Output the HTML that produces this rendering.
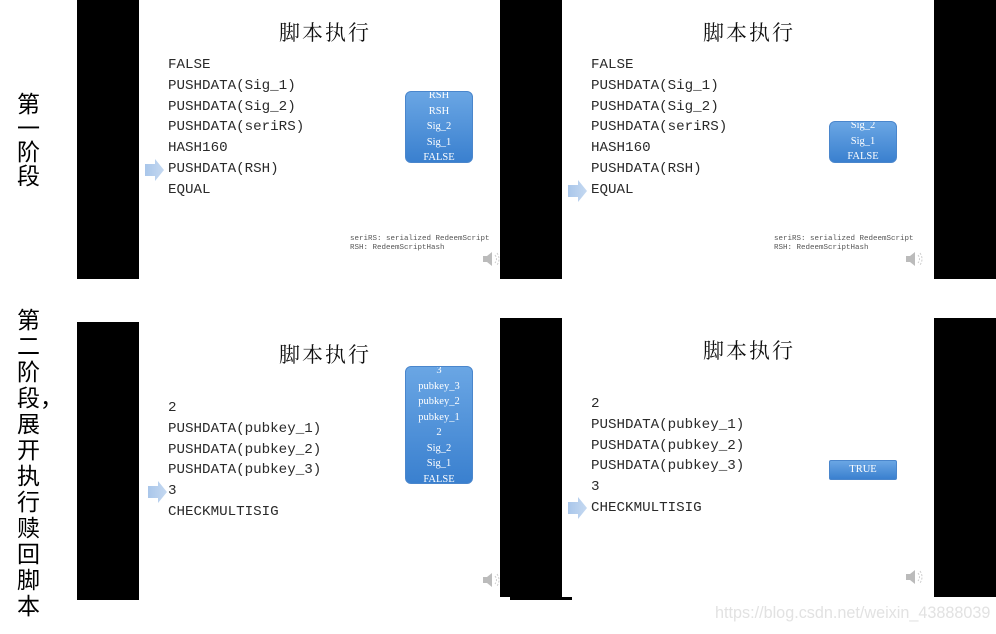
<!DOCTYPE html>
<html><head><meta charset="utf-8"><style>
body{margin:0;width:996px;height:634px;background:#fff;position:relative;overflow:hidden;font-family:"Liberation Sans",sans-serif}
.a{position:absolute}
.blk{position:absolute;background:#000}
.t{position:absolute;font-family:"Noto Serif CJK SC","Noto Serif CJK JP",serif;font-size:21px;color:#111;letter-spacing:2px}
.code{position:absolute;font-family:"Liberation Mono",monospace;font-size:14.2px;color:#2a2a2a;line-height:20.8px;white-space:pre}
.stk{position:absolute;background:linear-gradient(#6aa6e4,#3a80cf);border:1px solid #4a86cc;border-radius:6px;color:#fff;font-family:"Liberation Serif",serif;font-size:10.5px;text-align:center;line-height:15.5px;overflow:hidden}
.arr{position:absolute;width:19px;height:22px}
.note{position:absolute;font-family:"Liberation Mono",monospace;font-size:7.5px;color:#555;line-height:9px;white-space:pre}
.lab{position:absolute;left:17px;font-family:"Noto Sans CJK SC",sans-serif;font-size:23px;line-height:24px;width:24px;color:#000}
.spk{position:absolute;width:20px;height:18px}
</style></head><body>
<div class="lab" style="top:90px">第<br>一<br>阶<br>段</div>
<div class="lab" style="top:305px;line-height:26px">第<br>二<br>阶<br>段，<br>展<br>开<br>执<br>行<br>赎<br>回<br>脚<br>本</div>

<div class="blk" style="left:77px;top:0;width:62px;height:279px"></div>
<div class="blk" style="left:500px;top:0;width:62px;height:279px"></div>
<div class="blk" style="left:934px;top:0;width:62px;height:279px"></div>
<div class="blk" style="left:77px;top:322px;width:62px;height:278px"></div>
<div class="blk" style="left:500px;top:318px;width:62px;height:279px"></div>
<div class="blk" style="left:510px;top:597px;width:62px;height:3px"></div>
<div class="blk" style="left:934px;top:318px;width:62px;height:279px"></div>

<svg width="0" height="0" style="position:absolute"><defs><linearGradient id="g" x1="0" x2="1"><stop offset="0" stop-color="#a9c6ea"/><stop offset="1" stop-color="#c5d9f1"/></linearGradient></defs></svg>

<!-- slide 1 -->
<div class="t" style="left:279px;top:17px">脚本执行</div>
<div class="code" style="left:168px;top:55px">FALSE
PUSHDATA(Sig_1)
PUSHDATA(Sig_2)
PUSHDATA(seriRS)
HASH160
PUSHDATA(RSH)
EQUAL</div>
<svg class="arr" style="left:145px;top:159px" viewBox="0 0 19 22"><path d="M0 5H10V0L19 11L10 22V17H0Z" fill="url(#g)"/></svg>
<div class="stk" style="left:405px;top:91px;width:66px;height:70px"><div style="margin-top:-4px">RSH<br>RSH<br>Sig_2<br>Sig_1<br>FALSE</div></div>
<div class="note" style="left:350px;top:235px">seriRS: serialized RedeemScript
RSH: RedeemScriptHash</div>
<svg class="spk" style="left:482px;top:250px" viewBox="0 0 20 18"><path d="M1 6H5L10 2V16L5 12H1Z" fill="#bbb"/><path d="M13 5Q16 9 13 13M15 3Q19 9 15 15" stroke="#ccc" fill="none" stroke-dasharray="2 1.5"/></svg>

<!-- slide 2 -->
<div class="t" style="left:703px;top:17px">脚本执行</div>
<div class="code" style="left:591px;top:55px">FALSE
PUSHDATA(Sig_1)
PUSHDATA(Sig_2)
PUSHDATA(seriRS)
HASH160
PUSHDATA(RSH)
EQUAL</div>
<svg class="arr" style="left:568px;top:180px" viewBox="0 0 19 22"><path d="M0 5H10V0L19 11L10 22V17H0Z" fill="url(#g)"/></svg>
<div class="stk" style="left:829px;top:121px;width:66px;height:40px"><div style="margin-top:-4px">Sig_2<br>Sig_1<br>FALSE</div></div>
<div class="note" style="left:774px;top:235px">seriRS: serialized RedeemScript
RSH: RedeemScriptHash</div>
<svg class="spk" style="left:905px;top:250px" viewBox="0 0 20 18"><path d="M1 6H5L10 2V16L5 12H1Z" fill="#bbb"/><path d="M13 5Q16 9 13 13M15 3Q19 9 15 15" stroke="#ccc" fill="none" stroke-dasharray="2 1.5"/></svg>

<!-- slide 3 -->
<div class="t" style="left:279px;top:339px">脚本执行</div>
<div class="code" style="left:168px;top:398px">2
PUSHDATA(pubkey_1)
PUSHDATA(pubkey_2)
PUSHDATA(pubkey_3)
3
CHECKMULTISIG</div>
<svg class="arr" style="left:148px;top:481px" viewBox="0 0 19 22"><path d="M0 5H10V0L19 11L10 22V17H0Z" fill="url(#g)"/></svg>
<div class="stk" style="left:405px;top:366px;width:66px;height:116px"><div style="margin-top:-4px">3<br>pubkey_3<br>pubkey_2<br>pubkey_1<br>2<br>Sig_2<br>Sig_1<br>FALSE</div></div>
<svg class="spk" style="left:482px;top:571px" viewBox="0 0 20 18"><path d="M1 6H5L10 2V16L5 12H1Z" fill="#bbb"/><path d="M13 5Q16 9 13 13M15 3Q19 9 15 15" stroke="#ccc" fill="none" stroke-dasharray="2 1.5"/></svg>

<!-- slide 4 -->
<div class="t" style="left:703px;top:335px">脚本执行</div>
<div class="code" style="left:591px;top:394px">2
PUSHDATA(pubkey_1)
PUSHDATA(pubkey_2)
PUSHDATA(pubkey_3)
3
CHECKMULTISIG</div>
<svg class="arr" style="left:568px;top:497px" viewBox="0 0 19 22"><path d="M0 5H10V0L19 11L10 22V17H0Z" fill="url(#g)"/></svg>
<div class="stk" style="left:829px;top:460px;width:66px;height:18px;line-height:18px;border-radius:2px">TRUE</div>
<svg class="spk" style="left:905px;top:568px" viewBox="0 0 20 18"><path d="M1 6H5L10 2V16L5 12H1Z" fill="#bbb"/><path d="M13 5Q16 9 13 13M15 3Q19 9 15 15" stroke="#ccc" fill="none" stroke-dasharray="2 1.5"/></svg>

<div class="a" style="left:715px;top:604px;font-size:16.2px;color:#e2e2e2;white-space:nowrap">https://blog.csdn.net/weixin_43888039</div>
</body></html>
